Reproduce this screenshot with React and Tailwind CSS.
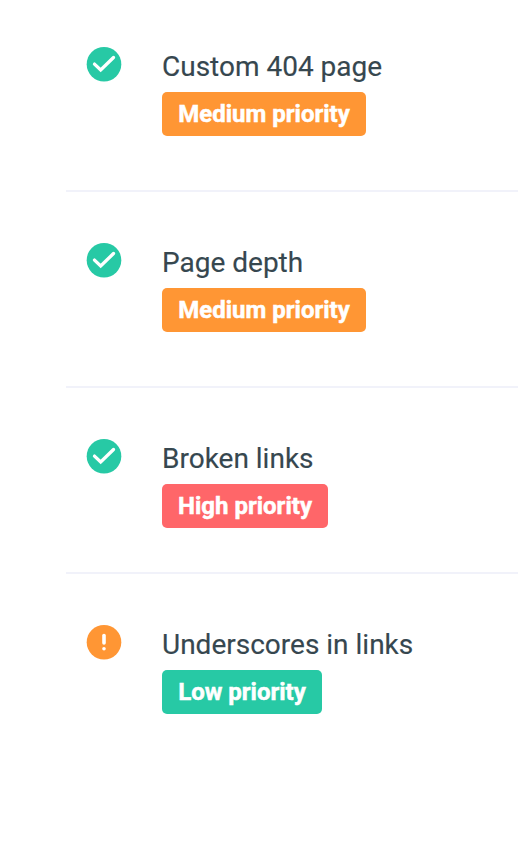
const items = [
  { title: "Custom 404 page", priority: "Medium priority", done: true, color: "bg-[#ff9634]", width: "w-[204px]", row: "h-[192px]" },
  { title: "Page depth", priority: "Medium priority", done: true, color: "bg-[#ff9634]", width: "w-[204px]", row: "h-[196px]" },
  { title: "Broken links", priority: "High priority", done: true, color: "bg-[#ff6669]", width: "w-[166px]", row: "h-[186px]" },
  { title: "Underscores in links", priority: "Low priority", done: false, color: "bg-[#27c9a5]", width: "w-[160px]", row: "h-[270px]" },
];

function StatusIcon({ done }) {
  return (
    <svg className="block size-9 shrink-0" viewBox="0 0 36 36" fill="none">
      <circle cx="18" cy="18.2" r="17.3" fill={done ? "#27c9a5" : "#ff9634"} />
      {done ? (
        <path d="M8.5 18.1L14.7 24L27.5 11.5" stroke="#fff" strokeWidth="3.3" strokeLinecap="round" />
      ) : (
        <g stroke="#fff" strokeWidth="3.6" strokeLinecap="round">
          <path d="M18 11.5V18.9" />
          <path d="M18 24.7V24.8" />
        </g>
      )}
    </svg>
  );
}

export default function App() {
  return (
    <main className="h-[844px] w-[518px] overflow-hidden bg-white pl-[66px] font-['Roboto',sans-serif]">
      {items.map((item, i) => (
        <section
          key={item.title}
          className={`flex pl-5 ${item.row} ${i === 0 ? "pt-[46px]" : "pt-[50px]"} ${i < 3 ? "border-b-2 border-[#f1f2fa]" : ""}`}
        >
          <StatusIcon done={item.done} />
          <div className="ml-10">
            <h2 className="h-[46px] pt-[5px] text-[28px] leading-8 font-normal whitespace-nowrap text-[#36474f] [-webkit-text-stroke:0.15px]">{item.title}</h2>
            <div className={`flex h-11 items-center justify-center rounded-[5px] text-2xl font-bold whitespace-nowrap text-white [-webkit-text-stroke:0.5px] ${item.color} ${item.width}`}>
              {item.priority}
            </div>
          </div>
        </section>
      ))}
    </main>
  );
}
